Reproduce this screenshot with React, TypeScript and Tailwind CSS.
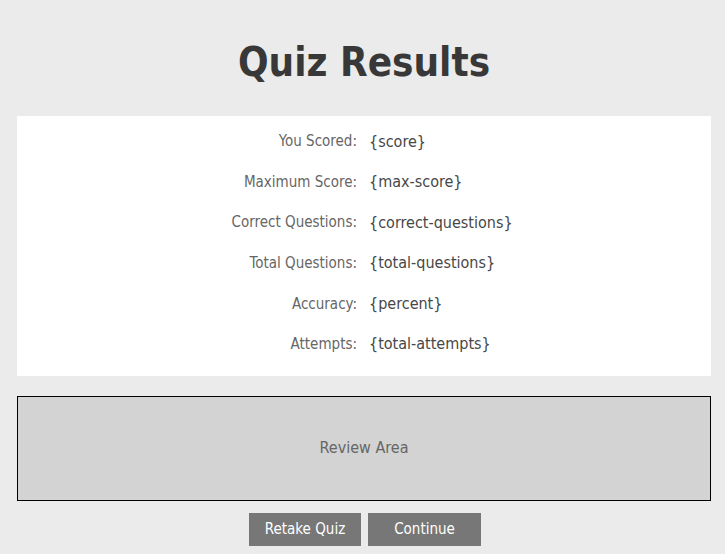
const ROWS = [
  { label: "You Scored:", value: "{score}" },
  { label: "Maximum Score:", value: "{max-score}" },
  { label: "Correct Questions:", value: "{correct-questions}" },
  { label: "Total Questions:", value: "{total-questions}" },
  { label: "Accuracy:", value: "{percent}" },
  { label: "Attempts:", value: "{total-attempts}" },
];

export default function App() {
  return (
    <div
      className="min-h-[554px] bg-[#ebebeb] pl-[17px] pr-[14px] pt-[34px]"
      style={{ fontFamily: '"DejaVu Sans Condensed", "DejaVu Sans", sans-serif' }}
    >
      <h1 className="text-center text-[40px] font-bold leading-[56px] text-[#383838]">
        Quiz Results
      </h1>

      {/* results panel */}
      <div className="mt-[26px] flex h-[260px] flex-col justify-center gap-[18.6px] bg-white pb-[6px]">
        {ROWS.map((r) => (
          <div key={r.label} className="flex h-[22px] items-center">
            <div className="w-[340px] text-right text-[15px] text-[#666]">{r.label}</div>
            <div className="ml-[12px] text-[16px] font-medium text-[#474747]">{r.value}</div>
          </div>
        ))}
      </div>

      {/* review */}
      <div className="mt-[20px] flex h-[105px] items-center justify-center border border-black bg-[#d3d3d3] pb-[2px] text-[16px] text-[#666]">
        Review Area
      </div>

      <div className="mt-[12px] flex justify-center gap-[7px] pl-[2px]">
        <button className="h-[33px] w-[112px] bg-[#777] text-[15px] text-white">Retake Quiz</button>
        <button className="h-[33px] w-[113px] bg-[#777] text-[15px] text-white">Continue</button>
      </div>
    </div>
  );
}
